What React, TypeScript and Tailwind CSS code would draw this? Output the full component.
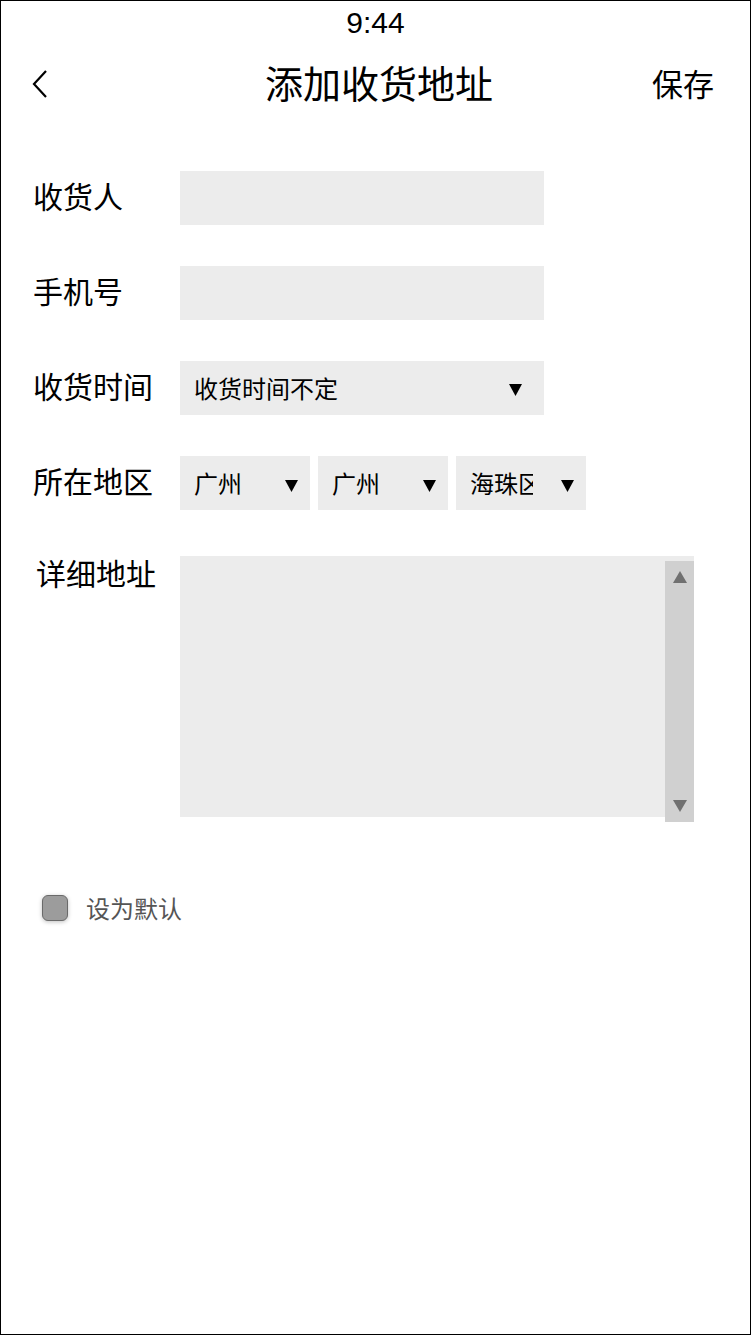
import React from "react";

const cjk = { fontFamily: '"Noto Sans CJK SC", "Noto Sans", sans-serif' };

function Arrow() {
  return (
    <svg width="13" height="12" viewBox="0 0 13 12" className="shrink-0">
      <polygon points="0,0 13,0 6.5,12" fill="#000" />
    </svg>
  );
}

function Row({ label, children }: { label: string; children: React.ReactNode }) {
  return (
    <div className="flex items-center">
      <div className="w-[179px] shrink-0 whitespace-nowrap pb-[6px] pl-[32px] text-[30px] leading-none text-black" style={cjk}>
        {label}
      </div>
      {children}
    </div>
  );
}

function Region({ text }: { text: string }) {
  return (
    <div className="flex h-[54px] w-[130px] shrink-0 items-center bg-[#ececec] pl-[14px] pr-[12px]">
      <span className="block w-[63px] overflow-hidden whitespace-nowrap text-[24px] leading-[34px] text-black">
        {text}
      </span>
      <span className="ml-auto mt-[5px]">
        <Arrow />
      </span>
    </div>
  );
}

export default function App() {
  return (
    <div className="h-[1336px] w-[752px] bg-white" style={cjk}>
      <div className="flex h-[1335px] w-[751px] flex-col border border-black bg-white">
        {/* status bar */}
        <div
          className="flex h-[43px] items-center justify-center text-[30px] leading-none text-black"
          style={{ fontFamily: '"Liberation Sans", Arial, sans-serif' }}
        >
          9:44
        </div>
        {/* nav bar */}
        <div className="flex h-[80px] items-center pl-[31px] pr-[36px]">
          <svg width="16" height="28" viewBox="0 0 16 28" className="shrink-0">
            <polyline points="14,1 2,14 14,27" fill="none" stroke="#000" strokeWidth="2.2" />
          </svg>
          <div className="ml-[217px] whitespace-nowrap pb-[5px] text-[38px] leading-none text-black">添加收货地址</div>
          <div className="ml-auto whitespace-nowrap pb-[4px] text-[31px] leading-none text-black">保存</div>
        </div>

        {/* form */}
        <div className="flex flex-col gap-[41px] pt-[47px]">
          <Row label="收货人">
            <div className="h-[54px] w-[364px] shrink-0 bg-[#ececec]" />
          </Row>
          <Row label="手机号">
            <div className="h-[54px] w-[364px] shrink-0 bg-[#ececec]" />
          </Row>
          <Row label="收货时间">
            <div className="flex h-[54px] w-[364px] shrink-0 items-center bg-[#ececec] pl-[14px] pr-[22px]">
              <span className="whitespace-nowrap text-[24px] leading-none text-black">收货时间不定</span>
              <span className="ml-auto mt-[3px]">
                <Arrow />
              </span>
            </div>
          </Row>
          <Row label="所在地区">
            <div className="flex gap-[8px]">
              <Region text="广州" />
              <Region text="广州" />
              <Region text="海珠区" />
            </div>
          </Row>
        </div>

        <div className="mt-[46px] flex items-start">
          <div className="w-[179px] shrink-0 whitespace-nowrap pl-[35px] pt-[1px] text-[30px] leading-none text-black">详细地址</div>
          <div className="relative h-[261px] w-[514px] shrink-0 bg-[#ececec]">
            <div className="absolute right-0 top-[5px] flex h-[261px] w-[29px] flex-col items-center justify-between bg-[#d0d0d0] py-[10px]">
              <svg width="14" height="12" viewBox="0 0 14 12">
                <polygon points="7,0 14,12 0,12" fill="#707070" />
              </svg>
              <svg width="14" height="12" viewBox="0 0 14 12">
                <polygon points="0,0 14,0 7,12" fill="#707070" />
              </svg>
            </div>
          </div>
        </div>

        <div className="mt-[78px] flex items-center pl-[41px]">
          <div className="h-[26px] w-[26px] shrink-0 rounded-[6px] border border-[#6a6a6a] bg-[#9c9c9c] shadow-[0_1px_4px_rgba(0,0,0,0.25)]" />
          <span className="ml-[18px] whitespace-nowrap text-[24px] leading-none text-[#555]">设为默认</span>
        </div>
      </div>
    </div>
  );
}
